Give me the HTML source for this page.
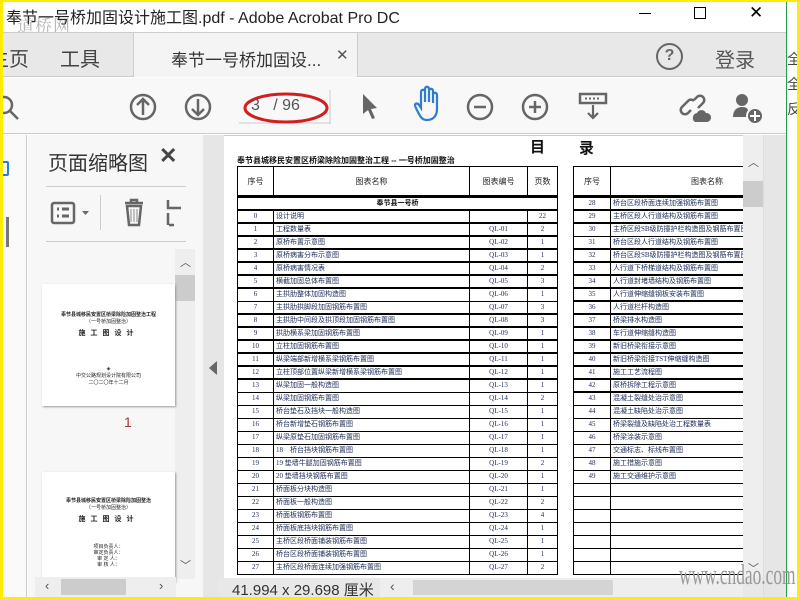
<!DOCTYPE html>
<html><head><meta charset="utf-8"><style>
*{margin:0;padding:0;box-sizing:border-box}
body{width:800px;height:600px;overflow:hidden;background:#ffec00;position:relative;font-family:"Liberation Sans","Noto Sans CJK SC",sans-serif}
.a{position:absolute}
#app{left:3px;top:2px;width:794px;height:595px;background:#fff;overflow:hidden}
.t{color:#222}
table{border-collapse:collapse;font-family:"Liberation Serif","Noto Sans CJK SC",serif;font-size:7px;color:#1a2a55;table-layout:fixed}
td{border:1px solid #000;height:13px;padding:0 2px;white-space:nowrap;overflow:hidden;line-height:11px}
tr.b td{border-bottom:2px solid #000}
td.c{text-align:center}
th{border:1px solid #000;border-bottom:3px solid #000;height:30px;font-weight:normal;font-size:8px;color:#222}
</style></head><body>
<div id="app" class="a">
<!-- title bar -->
<div class="a t" style="left:3px;top:2px;font-size:16px;">奉节一号桥加固设计施工图.pdf - Adobe Acrobat Pro DC</div>
<div class="a" style="left:14px;top:10px;font-size:17px;color:rgba(120,120,120,.55);font-family:'Noto Serif CJK SC',serif;letter-spacing:1px">道桥网</div>
<div class="a" style="left:636px;top:11px;width:12px;height:1px;background:#000"></div>
<div class="a" style="left:691px;top:5px;width:12px;height:12px;border:1px solid #000"></div>
<div class="a" style="left:746px;top:1px;font-size:17px;color:#000">✕</div>
<!-- tab bar -->
<div class="a" style="left:0;top:30px;width:783px;height:45px;background:#e8e8e8;border-top:1px solid #ccc;border-bottom:1px solid #ccc"></div>
<div class="a" style="left:130px;top:31px;width:225px;height:44px;background:#f4f4f4;border-left:1px solid #ccc;border-right:1px solid #ccc"></div>
<div class="a t" style="left:-14px;top:41px;font-size:20px;color:#444">主页</div>
<div class="a t" style="left:57px;top:41px;font-size:20px;color:#444">工具</div>
<div class="a t" style="left:168px;top:44px;font-size:17px;color:#333">奉节一号桥加固设...</div>
<div class="a" style="left:333px;top:44px;font-size:15px;color:#555">✕</div>
<div class="a" style="left:653px;top:41px;width:27px;height:27px;border:2.5px solid #666;border-radius:50%;text-align:center;font-size:16px;line-height:22px;color:#666;font-weight:bold">?</div>
<div class="a" style="left:712px;top:42px;font-size:20px;color:#555">登录</div>
<!-- toolbar -->
<div class="a" style="left:0;top:76px;width:783px;height:56px;background:#f8f8f8;border-bottom:1px solid #ccc"></div>
<svg class="a" style="left:0;top:76px" width="783" height="56">
<g fill="none" stroke="#666" stroke-width="2.5">
<circle cx="1" cy="27" r="8"/><path d="M7 33l8 8"/>
<circle cx="140" cy="29" r="12"/><path d="M140 37V21M134 27l6-6 6 6"/>
<circle cx="195" cy="29" r="12"/><path d="M195 21v16M189 31l6 6 6-6"/>
<circle cx="477" cy="29" r="12"/><path d="M471 29h12"/>
<circle cx="532" cy="29" r="12"/><path d="M526 29h12M532 23v12"/>
</g>
<path d="M236 45h92M327 12v34" stroke="#ccc"/>
<ellipse cx="283" cy="30" rx="41" ry="14" fill="none" stroke="#d21e1e" stroke-width="3"/>
<path d="M360 16l14 14-6 1 4 9-3 1-4-9-5 4z" fill="#666"/>
<path d="M416 36c-2-4-4-7-4-9 0-2 3-2 4 0l2 3V14c0-3 4-3 4 0v10-13c0-3 4-3 4 0v13-11c0-3 4-3 4 0v12-8c0-3 4-3 4 0v14c0 7-4 11-10 11-4 0-6-2-8-6z" fill="none" stroke="#2e7bd4" stroke-width="2.2"/>
<rect x="577" y="16" width="26" height="9" fill="none" stroke="#666" stroke-width="2.5"/>
<path d="M582 20.5h16" stroke="#666" stroke-dasharray="2 2" stroke-width="2"/>
<path d="M590 27v13M585 35l5 5 5-5" fill="none" stroke="#666" stroke-width="2.2"/>
<path d="M688 32l-3 3a4 4 0 0 1-6-6l6-6a4 4 0 0 1 6 0M691 22l3-3a4 4 0 0 1 6 6l-5 5" fill="none" stroke="#666" stroke-width="2.5"/>
<path d="M692 44a5 5 0 0 1 2-9 5 5 0 0 1 9 0 4 4 0 0 1 1 9z" fill="#666"/>
<circle cx="739" cy="22" r="6" fill="#666"/><path d="M730 39c0-7 4-10 9-10s6 2 6 4v6z" fill="#666"/>
<circle cx="752" cy="38" r="8" fill="#666" stroke="#f8f8f8" stroke-width="2"/><path d="M752 33v10M747 38h10" stroke="#fff" stroke-width="2"/>
</svg>
<div class="a" style="left:248px;top:95px;font-size:16px;color:#555">3&nbsp;&nbsp;&nbsp;/ 96</div>
<!-- left strip -->
<div class="a" style="left:0;top:133px;width:24px;height:462px;background:#fafafa;border-right:1px solid #ccc"></div>
<div class="a" style="left:-4px;top:159px;width:10px;height:15px;border:2px solid #2e7bd4;border-radius:2px"></div>
<div class="a" style="left:3px;top:215px;width:3px;height:30px;background:#777"></div>
<!-- panel -->
<div class="a" style="left:25px;top:133px;width:177px;height:462px;background:#f7f7f7;border-right:1px solid #ddd"></div>
<div class="a" style="left:45px;top:145px;font-size:20px;color:#333">页面缩略图</div>
<div class="a" style="left:156px;top:141px;font-size:22px;color:#444;font-weight:bold">✕</div>
<div class="a" style="left:43px;top:184px;width:140px;height:1px;background:#ccc"></div>
<div class="a" style="left:43px;top:239px;width:140px;height:1px;background:#ccc"></div>
<div class="a" style="left:97px;top:193px;width:1px;height:35px;background:#ccc"></div>
<svg class="a" style="left:40px;top:195px" width="150" height="35">
<rect x="9" y="6" width="22" height="20" rx="2" fill="none" stroke="#666" stroke-width="2.5"/>
<path d="M14 12h2M19 12h7M14 19h2M19 19h7" stroke="#666" stroke-width="3"/>
<path d="M39 14h7l-3.5 4z" fill="#666"/>
<path d="M82 6h18M88 6V3h6v3M84 9l2 19h10l2-19z" fill="none" stroke="#666" stroke-width="2.5"/>
<path d="M88 12v13M91 12v13M94 12v13" stroke="#888"/>
<path d="M125 3v8h10M125 28v-12M131 28h-5M125 11h13" fill="none" stroke="#666" stroke-width="2.5"/>
</svg>
<!-- thumbs -->
<div class="a" style="left:172px;top:247px;width:20px;height:330px;background:#eee"></div>
<div class="a" style="left:172px;top:273px;width:20px;height:26px;background:#ccc"></div>
<div class="a" style="left:177px;top:252px;font-size:11px;color:#555">︿</div>
<div class="a" style="left:177px;top:555px;font-size:11px;color:#555">﹀</div>
<div class="a" style="left:39px;top:282px;width:133px;height:122px;background:#fff;box-shadow:1px 1px 2px #999;font-size:5px;text-align:center;color:#222;overflow:hidden;white-space:nowrap">
<div style="margin-top:27px;font-weight:bold">奉节县城移民安置区桥梁除险加固整治工程</div><div>（一号桥加固整治）</div>
<div style="font-size:7px;font-weight:bold;letter-spacing:5px;margin-top:3px">施工图设计</div>
<div style="margin-top:28px">◈</div><div>中交公路规划设计院有限公司</div><div>二〇二〇年十二月</div></div>
<div class="a" style="left:121px;top:412px;font-size:14px;color:#a33">1</div>
<div class="a" style="left:39px;top:470px;width:133px;height:110px;background:#fff;box-shadow:1px 1px 2px #999;font-size:5px;text-align:center;color:#222;overflow:hidden;white-space:nowrap">
<div style="margin-top:25px;font-weight:bold">奉节县城移民安置区桥梁除险加固整治</div><div>（一号桥加固整治）</div>
<div style="font-size:7px;font-weight:bold;letter-spacing:5px;margin-top:3px">施工图设计</div>
<div style="margin-top:20px;line-height:6px">项目负责人：<br>审定负责人：<br>审 定 人：<br>审 核 人：</div></div>
<div class="a" style="left:32px;top:575px;width:141px;height:20px;background:#eee"></div>
<div class="a" style="left:58px;top:577px;width:65px;height:16px;background:#ccc"></div>
<div class="a" style="left:42px;top:576px;font-size:13px;color:#555">‹</div>
<div class="a" style="left:156px;top:576px;font-size:13px;color:#555">›</div>
<!-- collapse strip -->
<div class="a" style="left:200px;top:133px;width:21px;height:462px;background:#e6e6e6"></div>
<div class="a" style="left:206px;top:359px;width:0;height:0;border-top:7px solid transparent;border-bottom:7px solid transparent;border-right:8px solid #666"></div>
<!-- doc -->
<div class="a" style="left:221px;top:133px;width:519px;height:444px;background:#fff;border-top:1px solid #ccc;overflow:hidden">
<div class="a" style="left:306px;top:0px;font-size:15px;font-weight:bold;color:#111">目</div>
<div class="a" style="left:355px;top:1px;font-size:15px;font-weight:bold;color:#111">录</div>
<div class="a" style="left:13px;top:19px;font-size:8px;color:#111;font-weight:bold">奉节县城移民安置区桥梁除险加固整治工程 -- 一号桥加固整治</div>
<table class="a" style="left:13px;top:30px;width:320px">
<colgroup><col style="width:36px"><col style="width:196px"><col style="width:58px"><col style="width:30px"></colgroup>
<tr><th>序号</th><th>图表名称</th><th>图表编号</th><th>页数</th></tr>
<tr class="b"><td colspan="4" class="c" style="font-weight:bold;color:#111">奉节县一号桥</td></tr>
<tr class="b"><td class="c">0</td><td>设计说明</td><td></td><td class="c">22</td></tr>
<tr class="b"><td class="c">1</td><td>工程数量表</td><td class="c">QL-01</td><td class="c">2</td></tr>
<tr class="b"><td class="c">2</td><td>原桥布置示意图</td><td class="c">QL-02</td><td class="c">1</td></tr>
<tr class="b"><td class="c">3</td><td>原桥病害分布示意图</td><td class="c">QL-03</td><td class="c">1</td></tr>
<tr class="b"><td class="c">4</td><td>原桥病害情况表</td><td class="c">QL-04</td><td class="c">2</td></tr>
<tr class="b"><td class="c">5</td><td>横截加固总体布置图</td><td class="c">QL-05</td><td class="c">3</td></tr>
<tr><td class="c">6</td><td>主拱肋整体加固构造图</td><td class="c">QL-06</td><td class="c">1</td></tr>
<tr class="b"><td class="c">7</td><td>主拱肋拱脚段加固钢筋布置图</td><td class="c">QL-07</td><td class="c">3</td></tr>
<tr class="b"><td class="c">8</td><td>主拱肋中间段及拱顶段加固钢筋布置图</td><td class="c">QL-08</td><td class="c">3</td></tr>
<tr class="b"><td class="c">9</td><td>拱肋横系梁加固钢筋布置图</td><td class="c">QL-09</td><td class="c">1</td></tr>
<tr class="b"><td class="c">10</td><td>立柱加固钢筋布置图</td><td class="c">QL-10</td><td class="c">1</td></tr>
<tr class="b"><td class="c">11</td><td>纵梁端部新增横系梁钢筋布置图</td><td class="c">QL-11</td><td class="c">1</td></tr>
<tr class="b"><td class="c">12</td><td>立柱顶部位置纵梁新增横系梁钢筋布置图</td><td class="c">QL-12</td><td class="c">1</td></tr>
<tr><td class="c">13</td><td>纵梁加固一般构造图</td><td class="c">QL-13</td><td class="c">1</td></tr>
<tr><td class="c">14</td><td>纵梁加固钢筋布置图</td><td class="c">QL-14</td><td class="c">2</td></tr>
<tr><td class="c">15</td><td>桥台垫石及挡块一般构造图</td><td class="c">QL-15</td><td class="c">1</td></tr>
<tr><td class="c">16</td><td>桥台新增垫石钢筋布置图</td><td class="c">QL-16</td><td class="c">1</td></tr>
<tr><td class="c">17</td><td>纵梁原垫石加固钢筋布置图</td><td class="c">QL-17</td><td class="c">1</td></tr>
<tr><td class="c">18</td><td>18　桥台挡块钢筋布置图</td><td class="c">QL-18</td><td class="c">1</td></tr>
<tr><td class="c">19</td><td>19 垫墙牛腿加固钢筋布置图</td><td class="c">QL-19</td><td class="c">2</td></tr>
<tr><td class="c">20</td><td>20 垫墙挡块钢筋布置图</td><td class="c">QL-20</td><td class="c">1</td></tr>
<tr><td class="c">21</td><td>桥面板分块构造图</td><td class="c">QL-21</td><td class="c">1</td></tr>
<tr><td class="c">22</td><td>桥面板一般构造图</td><td class="c">QL-22</td><td class="c">2</td></tr>
<tr><td class="c">23</td><td>桥面板钢筋布置图</td><td class="c">QL-23</td><td class="c">4</td></tr>
<tr><td class="c">24</td><td>桥面板底挡块钢筋布置图</td><td class="c">QL-24</td><td class="c">1</td></tr>
<tr><td class="c">25</td><td>主桥区段桥面铺装钢筋布置图</td><td class="c">QL-25</td><td class="c">1</td></tr>
<tr><td class="c">26</td><td>桥台区段桥面铺装钢筋布置图</td><td class="c">QL-26</td><td class="c">1</td></tr>
<tr><td class="c">27</td><td>主桥区段桥面连续加强钢筋布置图</td><td class="c">QL-27</td><td class="c">2</td></tr>
</table>
<table class="a" style="left:349px;top:30px;width:230px">
<colgroup><col style="width:37px"><col style="width:193px"></colgroup>
<tr><th>序号</th><th>图表名称</th></tr>
<tr class="b"><td class="c">28</td><td>桥台区段桥面连续加强钢筋布置图</td></tr>
<tr class="b"><td class="c">29</td><td>主桥区段人行道结构及钢筋布置图</td></tr>
<tr><td class="c">30</td><td>主桥区段SB级防撞护栏构造图及钢筋布置图</td></tr>
<tr class="b"><td class="c">31</td><td>桥台区段人行道结构及钢筋布置图</td></tr>
<tr class="b"><td class="c">32</td><td>桥台区段SB级防撞护栏构造图及钢筋布置图</td></tr>
<tr class="b"><td class="c">33</td><td>人行道下桥梯道结构及钢筋布置图</td></tr>
<tr class="b"><td class="c">34</td><td>人行道封堵墙结构及钢筋布置图</td></tr>
<tr class="b"><td class="c">35</td><td>人行道伸缩缝钢板安装布置图</td></tr>
<tr class="b"><td class="c">36</td><td>人行道栏杆构造图</td></tr>
<tr class="b"><td class="c">37</td><td>桥梁排水构造图</td></tr>
<tr class="b"><td class="c">38</td><td>车行道伸缩缝构造图</td></tr>
<tr class="b"><td class="c">39</td><td>新旧桥梁衔接示意图</td></tr>
<tr class="b"><td class="c">40</td><td>新旧桥梁衔接TST伸缩缝构造图</td></tr>
<tr class="b"><td class="c">41</td><td>施工工艺流程图</td></tr>
<tr class="b"><td class="c">42</td><td>原桥拆除工程示意图</td></tr>
<tr><td class="c">43</td><td>混凝土裂缝处治示意图</td></tr>
<tr><td class="c">44</td><td>混凝土缺陷处治示意图</td></tr>
<tr><td class="c">45</td><td>桥梁裂缝及缺陷处治工程数量表</td></tr>
<tr><td class="c">46</td><td>桥梁涂装示意图</td></tr>
<tr><td class="c">47</td><td>交通标志、标线布置图</td></tr>
<tr><td class="c">48</td><td>施工措施示意图</td></tr>
<tr><td class="c">49</td><td>施工交通维护示意图</td></tr>
<tr><td></td><td></td></tr><tr><td></td><td></td></tr><tr><td></td><td></td></tr><tr><td></td><td></td></tr><tr><td></td><td></td></tr><tr><td></td><td></td></tr><tr><td></td><td></td></tr>
</table>
</div>
<!-- page vscroll -->
<div class="a" style="left:740px;top:133px;width:20px;height:444px;background:#eee"></div>
<div class="a" style="left:740px;top:179px;width:20px;height:26px;background:#ccc"></div>
<div class="a" style="left:745px;top:152px;font-size:11px;color:#555">︿</div>
<div class="a" style="left:745px;top:558px;font-size:11px;color:#555">﹀</div>
<div class="a" style="left:760px;top:133px;width:23px;height:462px;background:#e6e6e6;border-left:1px solid #ddd"></div>
<div class="a" style="left:783px;top:0;width:1px;height:595px;background:#2a9a4a"></div>
<div class="a" style="left:784px;top:45px;font-size:14px;color:#444;line-height:25px">全<br>全<br>反</div>
<!-- status -->
<div class="a" style="left:215px;top:576px;width:545px;height:19px;background:#e8e8e8"></div>
<div class="a" style="left:229px;top:577px;font-size:15px;color:#333">41.994 x 29.698 厘米</div>
<div class="a" style="left:377px;top:576px;width:363px;height:19px;background:#eee"></div>
<div class="a" style="left:410px;top:578px;width:200px;height:15px;background:#d4d4d4"></div>
<div class="a" style="left:387px;top:576px;font-size:14px;color:#555">‹</div>
<div class="a" style="left:676px;top:558px;font-size:28px;color:#999;font-family:'Liberation Serif',serif;transform:scaleX(.62);transform-origin:left;white-space:nowrap">www.cndao.com</div>
</div>
</body></html>
